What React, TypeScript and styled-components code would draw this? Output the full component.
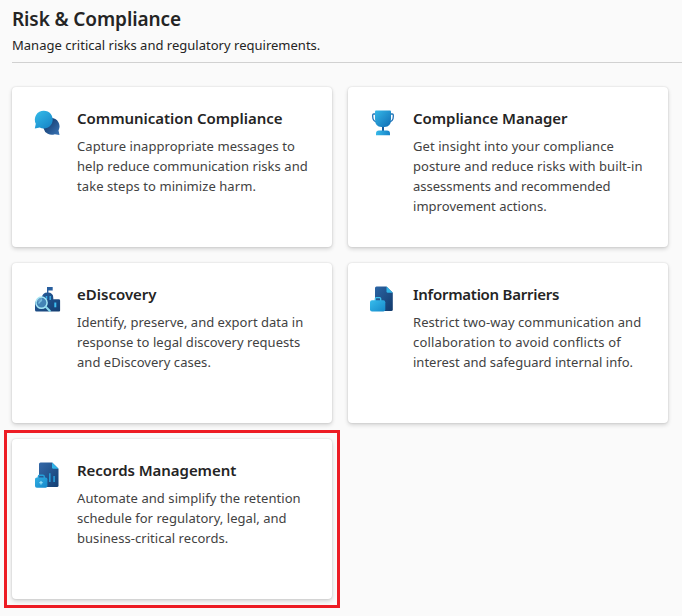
import React from "react";
import styled, { createGlobalStyle } from "styled-components";

const GlobalStyle = createGlobalStyle`
  * { box-sizing: border-box; }
  body {
    margin: 0;
    background: #fafafa;
    overflow: hidden;
    font-family: "Noto Sans", "Open Sans", sans-serif;
  }
`;

const Page = styled.main`
  height: 616px;
  padding: 6px 0 0 12px;
  overflow: hidden;
`;

const Header = styled.header`
  height: 57px;
  border-bottom: 1px solid #d1d1d1;
`;

const Title = styled.h1`
  margin: 0;
  font-size: 19px;
  line-height: 27px;
  font-weight: 600;
  letter-spacing: -0.11px;
  color: #242424;
  white-space: nowrap;
`;

const Subtitle = styled.p`
  margin: 2px 0 0;
  font-size: 13px;
  line-height: 20px;
  letter-spacing: 0.01px;
  color: #242424;
  white-space: nowrap;
`;

const Grid = styled.section`
  display: grid;
  grid-template-columns: 320px 320px;
  grid-auto-rows: 160px;
  gap: 16px;
  margin-top: 24px;
`;

const Card = styled.article<{ $highlighted?: boolean }>`
  position: relative;
  display: flex;
  gap: 11px;
  padding: 17px 0 0 14px;
  border-radius: 4px;
  background: #fff;
  box-shadow: 0 0 2px rgba(0, 0, 0, 0.14), 0 2px 4px rgba(0, 0, 0, 0.16);

  ${({ $highlighted }) =>
    $highlighted &&
    `&::after {
      content: "";
      position: absolute;
      inset: -9px -8px;
      border: 3px solid #ed1c24;
    }`}
`;

const Icon = styled.svg`
  flex: none;
  width: 40px;
  height: 40px;
`;

const CardBody = styled.div`
  padding-top: 3px;
`;

const CardTitle = styled.h2<{ $tracking: number }>`
  margin: 0 0 7px;
  font-size: 15px;
  line-height: 22px;
  font-weight: 600;
  letter-spacing: ${({ $tracking }) => $tracking}px;
  color: #242424;
  white-space: nowrap;
`;

const Line = styled.span<{ $tracking: number }>`
  display: block;
  font-size: 13px;
  line-height: 20px;
  letter-spacing: ${({ $tracking }) => $tracking}px;
  color: #424242;
  white-space: nowrap;
`;

const ChatIcon = () => (
  <Icon viewBox="0 0 40 40">
    <defs>
      <linearGradient id="chatBack" x1="0" y1="0" x2="1" y2="1">
        <stop offset="0.3" stopColor="#1a4378" />
        <stop offset="1" stopColor="#3a76b8" />
      </linearGradient>
      <linearGradient id="chatFront" x1="0" y1="0" x2="0.8" y2="1">
        <stop offset="0" stopColor="#35bdea" />
        <stop offset="1" stopColor="#1786c8" />
      </linearGradient>
    </defs>
    <path d="M25.2 14a8.4 8.4 0 0 1 7.3 12.5l1 4.6-4.7-.9A8.4 8.4 0 1 1 25.2 14Z" fill="url(#chatBack)" />
    <path d="M17.8 6.7a8.9 8.9 0 1 1-4.1 16.8l-4.9 1 1-4.8A8.9 8.9 0 0 1 17.8 6.7Z" fill="url(#chatFront)" />
  </Icon>
);

const TrophyIcon = () => (
  <Icon viewBox="0 0 40 40">
    <defs>
      <linearGradient id="cup" x1="0" y1="0" x2="1" y2="1">
        <stop offset="0" stopColor="#35b8e8" />
        <stop offset="1" stopColor="#0f6cb4" />
      </linearGradient>
      <linearGradient id="cupBase" x1="0" y1="0" x2="1" y2="0">
        <stop offset="0" stopColor="#35b8e8" />
        <stop offset="1" stopColor="#1683c8" />
      </linearGradient>
    </defs>
    <path d="M14 10h-2.3q-1 0-1 1v1.5q0 5 4.5 5.5M28 10h2.3q1 0 1 1v1.5q0 5-4.5 5.5" fill="none" stroke="#2475b8" strokeWidth="1.3" />
    <rect x="20" y="21" width="2" height="7" fill="#185a9d" />
    <path d="M14 6.5h14q1 0 1 1V15q0 8-6.500 8h-3Q13 23 13 15V7.5q0-1 1-1Z" fill="url(#cup)" />
    <path d="M17 26.500h8q3 0 3 3v1.800H14v-1.800q0-3 3-3Z" fill="url(#cupBase)" />
  </Icon>
);

const CourthouseIcon = () => (
  <Icon viewBox="0 0 40 40">
    <defs>
      <linearGradient id="court" x1="0" y1="0" x2="1" y2="1">
        <stop offset="0" stopColor="#285f9e" />
        <stop offset="1" stopColor="#143d70" />
      </linearGradient>
    </defs>
    <path d="M21 7h5.7v3.5H22.4V13H21Z" fill="#285e9e" />
    <path d="M9 30V22.5q0-1 1-1h6V18q0-5.5 5.7-5.5T27.3 18v1.3h5.5q1.3 0 1.3 1.3v9.900q0 1-1 1H10.500q-1.500 0-1.500-1.500Z" fill="url(#court)" />
    <path d="M20.5 16v3.2M24.200 16v4" stroke="#38a9e2" strokeWidth="1.500" />
    <path d="M29.300 22.500v4.800" stroke="#3dbdf0" strokeWidth="2" />
    <circle cx="15.500" cy="22.700" r="5.600" fill="#4a8cbd" fillOpacity=".85" stroke="#a7e7f5" strokeWidth="1.500" />
    <path d="m12.500 23.500 3.500-4" stroke="#78bddd" strokeWidth="1.300" />
    <path d="m19.700 26.800 4.200 4.200" stroke="#8cd9ee" strokeWidth="2" strokeLinecap="round" />
  </Icon>
);

const BriefcaseFileIcon = () => (
  <Icon viewBox="0 0 40 40">
    <defs>
      <linearGradient id="caseFile" x1="0" y1="0" x2="1" y2="1">
        <stop offset="0" stopColor="#2c65a5" />
        <stop offset="1" stopColor="#123a6b" />
      </linearGradient>
      <linearGradient id="briefcase" x1="0" y1="0" x2="1" y2="1">
        <stop offset="0" stopColor="#37bcec" />
        <stop offset="1" stopColor="#168aca" />
      </linearGradient>
    </defs>
    <path d="M14.500 6.500h10l6.300 6.300v16.700q0 1.500-1.500 1.500H14.500Q13 31 13 29.500V8q0-1.500 1.500-1.500Z" fill="url(#caseFile)" />
    <path d="M24.500 6.500l6.300 6.300h-5q-1.300 0-1.300-1.300Z" fill="#32b4e8" />
    <path d="M13.300 21v-2.300q0-1 1-1h3.400q1 0 1 1V21" fill="none" stroke="#3dc2ee" strokeWidth="1.300" />
    <rect x="8" y="20.200" width="15.300" height="11.300" rx="2" fill="url(#briefcase)" />
  </Icon>
);

const LockedRecordIcon = () => (
  <Icon viewBox="0 0 40 40">
    <defs>
      <linearGradient id="record" x1="0" y1="0" x2="1" y2="1">
        <stop offset="0" stopColor="#3569a8" />
        <stop offset="1" stopColor="#123f73" />
      </linearGradient>
      <linearGradient id="padlock" x1="0" y1="0" x2="1" y2="1">
        <stop offset="0" stopColor="#32aee2" />
        <stop offset="1" stopColor="#1488cb" />
      </linearGradient>
    </defs>
    <path d="M14.500 6.500h11.700l6.300 6.300v16.700q0 1.500-1.500 1.500H14.500Q13 31 13 29.500V8q0-1.500 1.500-1.500Z" fill="url(#record)" />
    <path d="M26 6.500l6.500 6.300h-5.200q-1.300 0-1.300-1.300Z" fill="#32b4e8" />
    <path d="M23.800 17.300V26M28.100 20v6" stroke="#259bd6" strokeWidth="1.600" />
    <path d="M12.300 22.500v-1.800q0-1.500 1.500-1.500h3q1.500 0 1.500 1.500v1.800" fill="none" stroke="#269fd8" strokeWidth="1.400" />
    <rect x="9" y="21.500" width="12.400" height="10.200" rx="1.800" fill="url(#padlock)" />
    <path d="M15 25v3.400M13.300 26.700h3.400" stroke="#8fdcf5" strokeWidth="1.300" />
  </Icon>
);

type Text = [content: string, tracking: number];

interface Solution {
  icon: React.ComponentType;
  title: Text;
  lines: Text[];
  highlighted?: boolean;
}

const solutions: Solution[] = [
  {
    icon: ChatIcon,
    title: ["Communication Compliance", -0.03],
    lines: [
      ["Capture inappropriate messages to", 0.06],
      ["help reduce communication risks and", 0.05],
      ["take steps to minimize harm.", 0.07],
    ],
  },
  {
    icon: TrophyIcon,
    title: ["Compliance Manager", -0.05],
    lines: [
      ["Get insight into your compliance", 0.08],
      ["posture and reduce risks with built-in", 0.07],
      ["assessments and recommended", 0],
      ["improvement actions.", 0.04],
    ],
  },
  {
    icon: CourthouseIcon,
    title: ["eDiscovery", 0],
    lines: [
      ["Identify, preserve, and export data in", 0.02],
      ["response to legal discovery requests", 0.04],
      ["and eDiscovery cases.", 0.04],
    ],
  },
  {
    icon: BriefcaseFileIcon,
    title: ["Information Barriers", -0.26],
    lines: [
      ["Restrict two-way communication and", 0.07],
      ["collaboration to avoid conflicts of", 0.16],
      ["interest and safeguard internal info.", 0],
    ],
  },
  {
    icon: LockedRecordIcon,
    title: ["Records Management", -0.05],
    lines: [
      ["Automate and simplify the retention", 0.07],
      ["schedule for regulatory, legal, and", 0.03],
      ["business-critical records.", 0.04],
    ],
    highlighted: true,
  },
];

export default function App() {
  return (
    <>
      <GlobalStyle />
      <Page>
        <Header>
          <Title>Risk &amp; Compliance</Title>
          <Subtitle>Manage critical risks and regulatory requirements.</Subtitle>
        </Header>
        <Grid>
          {solutions.map(({ icon: Glyph, title, lines, highlighted }) => (
            <Card key={title[0]} $highlighted={highlighted}>
              <Glyph />
              <CardBody>
                <CardTitle $tracking={title[1]}>{title[0]}</CardTitle>
                {lines.map(([content, tracking]) => (
                  <Line key={content} $tracking={tracking}>
                    {content}
                  </Line>
                ))}
              </CardBody>
            </Card>
          ))}
        </Grid>
      </Page>
    </>
  );
}
